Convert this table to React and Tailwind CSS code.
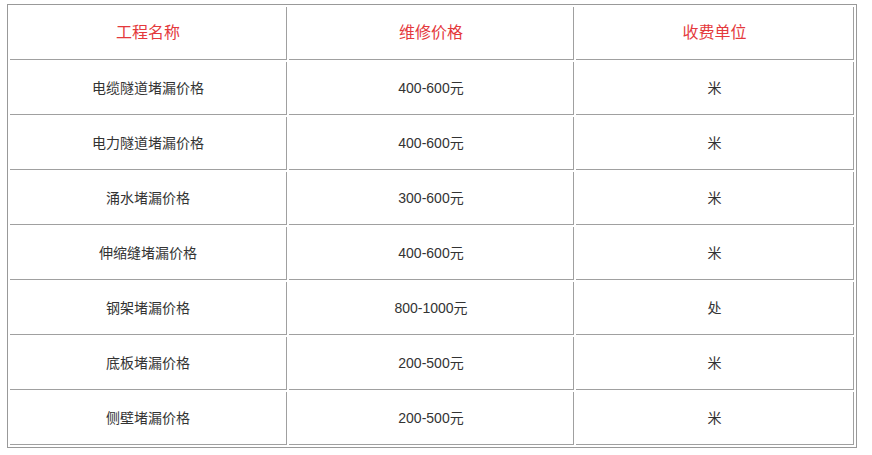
import React from "react";

const rows = [
  ["电缆隧道堵漏价格", "400-600元", "米"],
  ["电力隧道堵漏价格", "400-600元", "米"],
  ["涌水堵漏价格", "300-600元", "米"],
  ["伸缩缝堵漏价格", "400-600元", "米"],
  ["钢架堵漏价格", "800-1000元", "处"],
  ["底板堵漏价格", "200-500元", "米"],
  ["侧壁堵漏价格", "200-500元", "米"],
];

const cell = "border-r border-b border-[#a0a0a0] text-center align-middle p-0";

const App = () => {
  return (
    <div className="min-h-[455px] w-[872px] bg-white pl-[7px] pt-[4px] font-['Liberation_Sans','Noto_Sans_CJK_SC',sans-serif]">
      <table className="w-[849px] table-fixed border border-[#999] border-separate border-spacing-[2px]">
        <colgroup>
          <col className="w-[277px]" />
          <col className="w-[285px]" />
          <col className="w-[278px]" />
        </colgroup>
        <thead>
          <tr className="h-[53px]">
            {["工程名称", "维修价格", "收费单位"].map((h) => (
              <th key={h} className={`${cell} text-[16px] font-normal text-[#e4393c]`}>
                {h}
              </th>
            ))}
          </tr>
        </thead>
        <tbody>
          {rows.map((r, i) => (
            <tr key={i} className="h-[53px]">
              {r.map((c, j) => (
                <td key={j} className={`${cell} text-[14px] text-[#333]`}>
                  {c}
                </td>
              ))}
            </tr>
          ))}
        </tbody>
      </table>
    </div>
  );
};

export default App;
